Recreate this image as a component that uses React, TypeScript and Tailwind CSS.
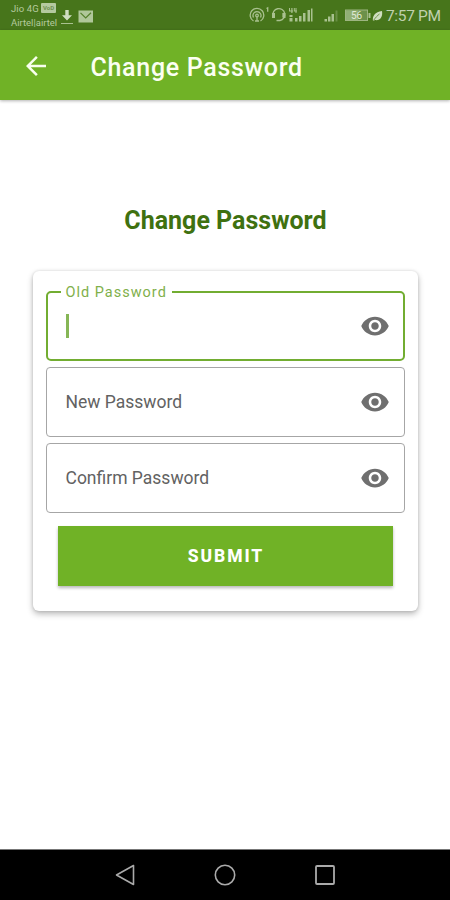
import React from "react";

function EyeIcon() {
  return (
    <svg viewBox="0 0 24 24" className="h-[30px] w-[30px] fill-[#6f6f6f]">
      <path d="M12 4.5C7 4.5 2.73 7.61 1 12c1.73 4.39 6 7.5 11 7.5s9.27-3.11 11-7.5c-1.73-4.39-6-7.5-11-7.5zM12 17c-2.76 0-5-2.24-5-5s2.24-5 5-5 5 2.24 5 5-2.24 5-5 5zm0-8c-1.66 0-3 1.34-3 3s1.34 3 3 3 3-1.34 3-3-1.34-3-3-3z" />
    </svg>
  );
}

function StatusBar() {
  return (
    <div className="flex h-[30px] shrink-0 items-center bg-[#47751b] text-[#b5ca9f]">
      <div className="ml-[11px] flex w-[46px] flex-col">
        <div className="flex h-[13px] items-center">
          <span className="w-[30px] text-[9.5px] leading-[13px] tracking-[0.1px] whitespace-nowrap">Jio 4G</span>
          <span className="flex h-[10px] w-[15px] items-center justify-center rounded-[1px] bg-[#b5ca9f] text-[6px] leading-none font-bold text-[#6f9150]">VoD</span>
        </div>
        <span className="mt-px text-[9.5px] leading-[13px] whitespace-nowrap">Airtel|airtel</span>
      </div>
      <svg viewBox="0 0 14 16" className="mt-[3px] ml-[3px] h-[16px] w-[14px]">
        <path d="M5.3 1h3.4v5.2H12L7 11.6 2 6.2h3.3z" fill="#d0dec1" />
        <path d="M1 14.5h12" stroke="#a9c190" strokeWidth="1" />
      </svg>
      <svg viewBox="0 0 16 13" className="mt-[2px] ml-[4px] h-[13px] w-[16px]">
        <rect x="0.5" y="0.5" width="14.5" height="12" fill="#b0c79a" />
        <path d="M2.5 2.8 7.7 8l5.3-5.2" fill="none" stroke="#55802c" strokeWidth="1.2" />
      </svg>
      <svg viewBox="0 0 136 20" className="ml-[155px] h-[20px] w-[136px] shrink-0">
        <g fill="none" stroke="#a9c18f" strokeWidth="1.3">
          <path d="M4.5 16a6.8 6.8 0 1 1 7 0" />
          <path d="M4.5 12.5a4 4 0 1 1 7 0" />
          <circle cx="8" cy="10.5" r="1.3" />
          <path d="M8 11.5v5M6 16h4M17.5 3.5l1.2-.7v4" />
          <path d="M24 11a6 6 0 1 1 7 4.5M24.5 11.5v-3M31 15.5h-3.5M34 8v4.5" />
        </g>
        <path d="M23 8h3v5h-3zM34 8h2.5v5H34z" fill="#a9c18f" />
        <g fill="#a9c18f">
          <path d="M42.3 3h1.2v5h-1.2zM40 5.5h4v1h-4zM40 3h1v3h-1zM46.5 3h1v5h-1zM44.8 3h1v3h-1zM44.8 5.5H48v1h-3.2zM40.500 10h3v2h-3zM40.500 13h3v3.500h-3z" />
          <path d="M46 13h2.5v3.5H46zM50 11h2.5v5.5H50zM54 8h2.5v8.5H54zM58.5 5H61v11.5h-2.5zM62 3.5h1.5v13H62z" />
          <path d="M75.5 14H78v2.5h-2.5zM79 11.5h2.5v5H79zM82.5 9H85v7.5h-2.5z" />
          <path d="M86.5 5.5h2v11h-2z" opacity=".35" />
        </g>
        <rect x="96.5" y="5" width="22" height="10.5" fill="#6c914a" stroke="#9db581" />
        <rect x="97" y="5.5" width="12" height="9.5" fill="#91af75" />
        <path d="M119.5 8h2v5h-2z" fill="#a9c18f" />
        <text x="102" y="14" fontSize="10" fontFamily="Roboto, sans-serif" fill="#e0ead5">56</text>
        <path d="M124 16c-1-5 2-9 9-10 1 6-2 10-7 9z" fill="#cfddbf" />
        <path d="M124.5 15.5c2-3 4-5 6-6.5" stroke="#55802c" strokeWidth=".8" fill="none" />
      </svg>
      <span className="mt-[3px] ml-px text-[15.5px] tracking-[-0.35px] whitespace-nowrap text-[#c0d0ae]">7:57 PM</span>
    </div>
  );
}

function PasswordField({ label }: { label: string }) {
  return (
    <div className="flex h-[70px] items-center justify-between rounded-[4px] border border-[#a6a6a6] pr-[14px] pl-[19px]">
      <span className="text-[17.5px] text-[#626262]">{label}</span>
      <EyeIcon />
    </div>
  );
}

export default function App() {
  return (
    <div className="flex h-[900px] w-[450px] flex-col overflow-hidden bg-white font-[Roboto,sans-serif]">
      <StatusBar />
      <header className="z-10 flex h-[70px] shrink-0 items-center bg-[#70b226] text-white shadow-[0_1px_3px_rgba(0,0,0,0.3)]">
        <svg viewBox="0 0 24 24" className="mt-px ml-[21px] h-[30px] w-[30px] fill-[#f8ffed]">
          <path d="M20 11H7.83l5.59-5.59L12 4l-8 8 8 8 1.41-1.41L7.83 13H20v-2z" />
        </svg>
        <h1 className="mt-[5px] ml-[39.5px] text-[25px] font-medium tracking-[0.7px] whitespace-nowrap text-[#fbfff2]">Change Password</h1>
      </header>
      <main className="flex flex-1 flex-col items-center">
        <h2 className="mt-[105px] ml-px text-[25px] leading-[32px] font-bold whitespace-nowrap text-[#3f7110]">Change Password</h2>
        <section className="mt-[34px] flex h-[340px] w-[385px] flex-col rounded-[6px] bg-white px-[13px] shadow-[0_3px_6px_rgba(0,0,0,0.28),0_0_3px_rgba(0,0,0,0.12)]">
          <fieldset className="mt-[12px] h-[78px] min-w-0 rounded-[5px] border-2 border-[#72ad31] pl-[13px]">
            <legend className="h-[18px] px-[5px] text-[14.5px] leading-[19px] tracking-[1px] whitespace-nowrap text-[#7fb04b]">Old Password</legend>
            <div className="flex h-[49px] items-center justify-between pr-[13px] pl-[5px]">
              <span className="h-[24px] w-[3px] bg-[#86b656]" />
              <EyeIcon />
            </div>
          </fieldset>
          <div className="mt-[6px] flex flex-col gap-[6px]">
            <PasswordField label="New Password" />
            <PasswordField label="Confirm Password" />
          </div>
          <button className="mx-[12px] mt-[13px] h-[60px] bg-[#70b226] pt-px pl-[2px] text-[17.5px] font-extrabold tracking-[1.9px] text-white shadow-[0_2px_3px_rgba(0,0,0,0.28)]">SUBMIT</button>
        </section>
      </main>
      <nav className="flex h-[51px] shrink-0 items-center justify-center gap-[76px] border-t border-[#777] bg-black">
        <svg viewBox="0 0 24 24" className="h-[24px] w-[24px] fill-none stroke-[#aaa] [stroke-width:1.6]">
          <path d="M20.5 2.5v19L3.5 12z" strokeLinejoin="round" />
        </svg>
        <svg viewBox="0 0 24 24" className="h-[24px] w-[24px] fill-none stroke-[#aaa] [stroke-width:1.6]">
          <circle cx="12" cy="12" r="9.7" />
        </svg>
        <svg viewBox="0 0 24 24" className="h-[24px] w-[24px] fill-none stroke-[#aaa] [stroke-width:1.8]">
          <rect x="3" y="3" width="18" height="18" rx="1" />
        </svg>
      </nav>
    </div>
  );
}
